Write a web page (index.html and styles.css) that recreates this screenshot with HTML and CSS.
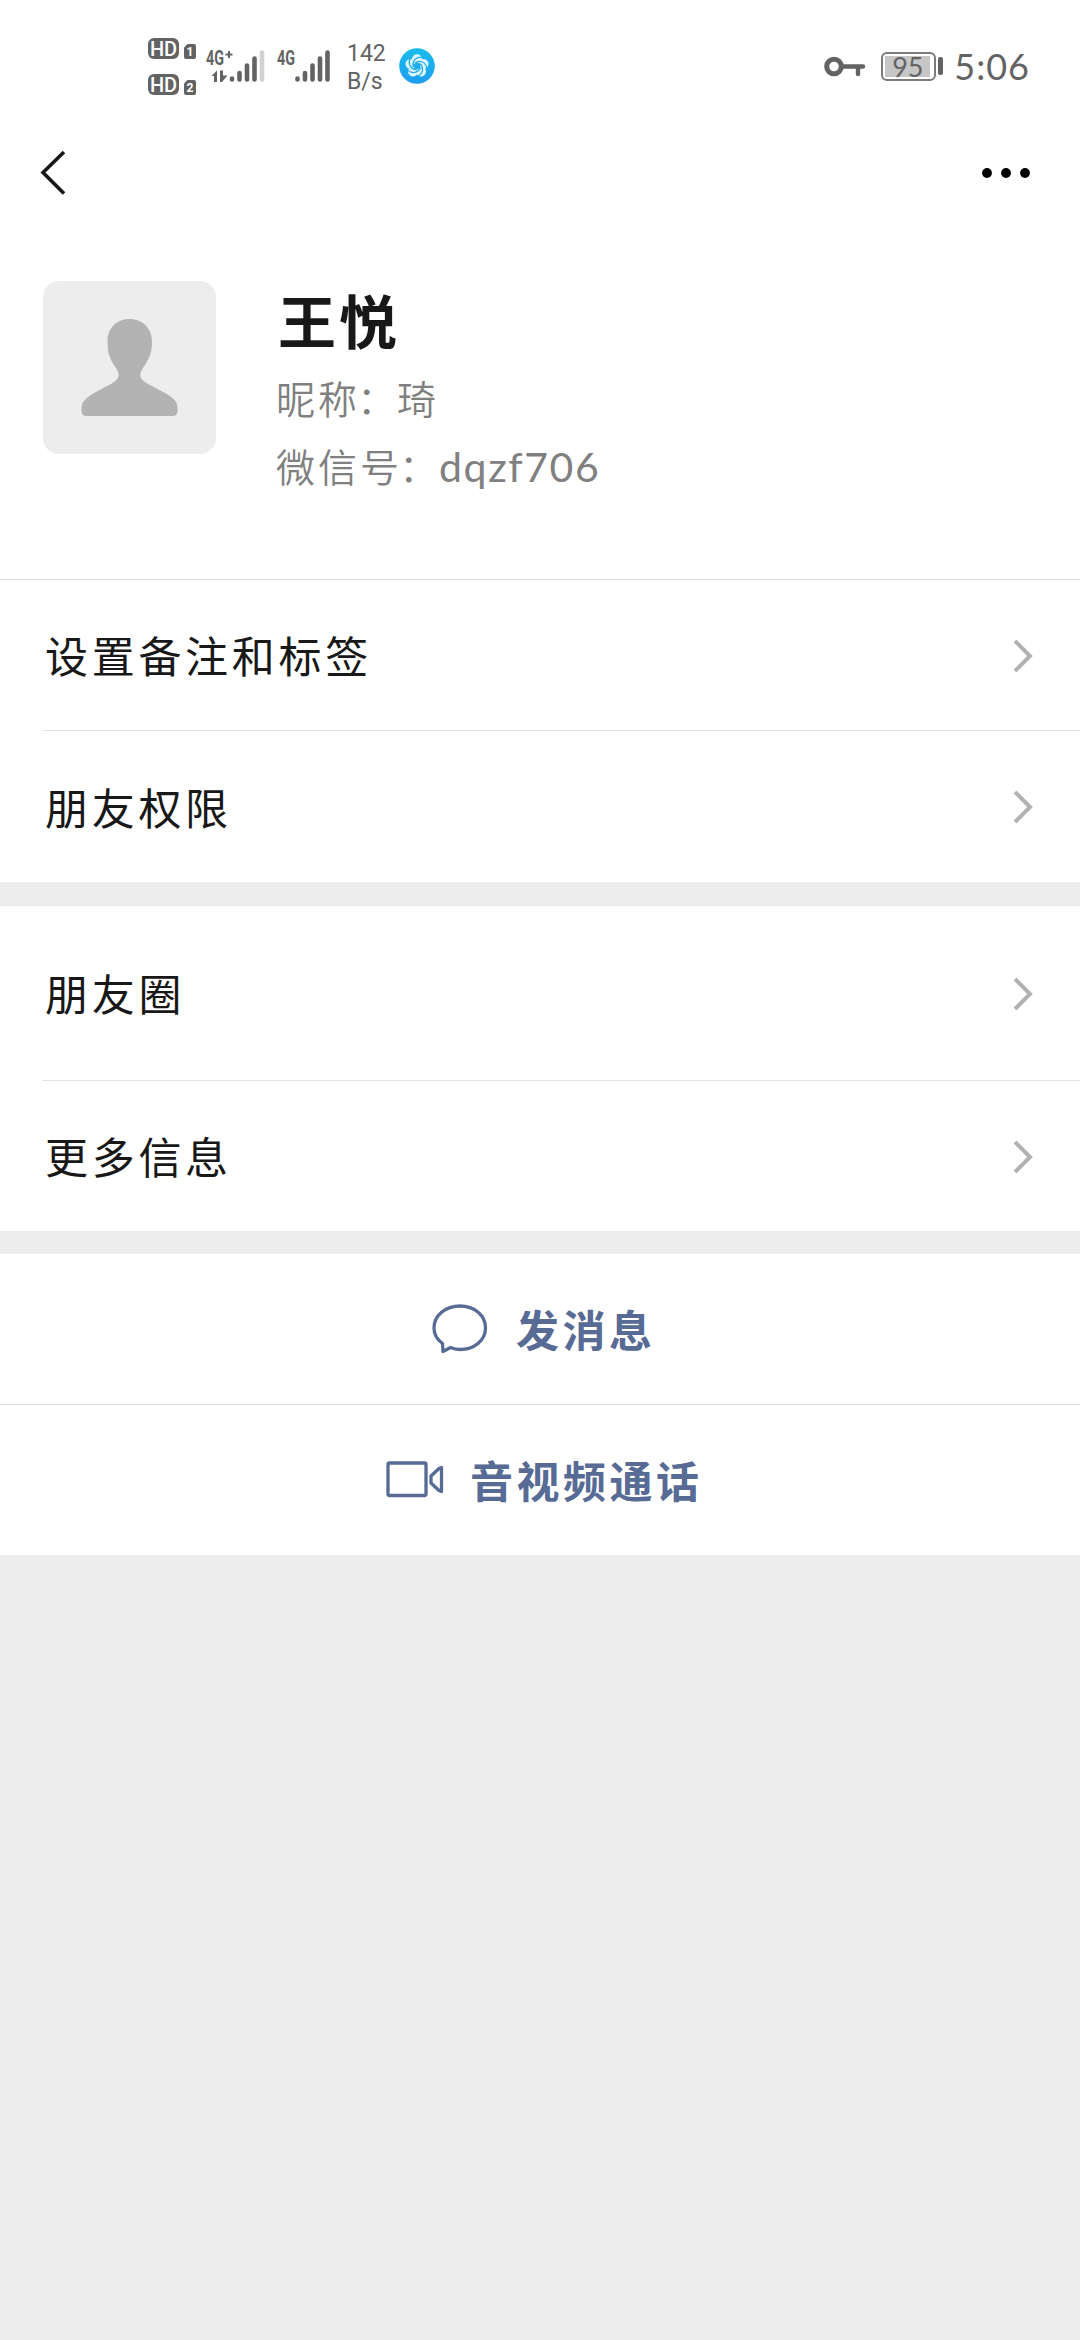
FILE: index.html
```html
<!DOCTYPE html>
<html lang="zh-CN">
<head>
<meta charset="utf-8">
<title>王悦</title>
<link rel="stylesheet" href="styles.css">
</head>
<body>
<header class="status">
  <div class="hd-group">
    <div class="hd-row"><span class="hd">HD</span><svg class="sim" viewBox="0 0 12 15"><path d="M3.5 0H10a2 2 0 0 1 2 2v11a2 2 0 0 1-2 2H2a2 2 0 0 1-2-2V3.5z" fill="#636363"/><text x="6" y="12" text-anchor="middle">1</text></svg></div>
    <div class="hd-row"><span class="hd">HD</span><svg class="sim" viewBox="0 0 12 15"><path d="M3.5 0H10a2 2 0 0 1 2 2v11a2 2 0 0 1-2 2H2a2 2 0 0 1-2-2V3.5z" fill="#636363"/><text x="6" y="12" text-anchor="middle">2</text></svg></div>
  </div>
  <svg class="signal-one" viewBox="0 0 62 40">
    <text class="net" x="1" y="21" textLength="18" lengthAdjust="spacingAndGlyphs">4G</text>
    <path d="M20.500 10.500h7M24 7v7" stroke="#636363" stroke-width="2"/>
    <g fill="#636363"><path d="M6.500 32L12 26.500V38H9V32Z"/><path d="M15 26.500H18V31.500H22.500L17 38H15Z"/></g>
    <g stroke="#636363" stroke-width="4.600" stroke-linecap="round"><path d="M27 34.500v1M34.500 29v6.500M42 21.500v14M49.500 14.500v21"/><path d="M57 8.500v27" stroke="#d2d2d2"/></g>
  </svg>
  <svg class="signal-two" viewBox="0 0 56 40">
    <text class="net" x="1" y="21" textLength="18" lengthAdjust="spacingAndGlyphs">4G</text>
    <g stroke="#636363" stroke-width="4.600" stroke-linecap="round"><path d="M21.500 34.500v1M29 29v6.500M36.500 21.500v14M44 14.500v21M51.500 8.500v27"/></g>
  </svg>
  <div class="speed"><span>142</span><span>B/s</span></div>
  <svg class="swirl" viewBox="-18 -18 36 36">
    <defs><linearGradient id="sky" x1="0" y1="0" x2="0" y2="1"><stop offset="0" stop-color="#19bde9"/><stop offset="1" stop-color="#1e9cf2"/></linearGradient>
    <path id="arm" d="M-2-3C2-6 8-5 10 2"/><circle id="lobe" cx="0" cy="-6.800" r="5"/></defs>
    <circle r="17.800" fill="url(#sky)"/>
    <g fill="#dff6ff"><use href="#lobe"/><use href="#lobe" transform="rotate(72)"/><use href="#lobe" transform="rotate(144)"/><use href="#lobe" transform="rotate(216)"/><use href="#lobe" transform="rotate(288)"/></g>
    <circle r="3.200" fill="#1eaeec"/>
    <g fill="none" stroke="#1eaeec" stroke-width="1.300"><use href="#arm"/><use href="#arm" transform="rotate(72)"/><use href="#arm" transform="rotate(144)"/><use href="#arm" transform="rotate(216)"/><use href="#arm" transform="rotate(288)"/></g>
  </svg>
  <svg class="key" viewBox="0 0 42 22"><circle cx="10" cy="10.500" r="7.300" fill="none" stroke="#636363" stroke-width="5"/><path d="M18 10.500H39M34 10.500V18" fill="none" stroke="#636363" stroke-width="4.400" stroke-linecap="round"/></svg>
  <div class="battery"><span class="charge">95</span></div><i class="battery-tip"></i>
  <time class="clock">5:06</time>
</header>

<nav class="nav">
  <svg class="back" viewBox="0 0 28 48"><path d="M24 3L3 23.500L24 44.500" fill="none" stroke="#181818" stroke-width="3.600"/></svg>
  <svg class="more" viewBox="0 0 50 12"><circle cx="6" cy="6" r="4.900"/><circle cx="25" cy="6" r="4.900"/><circle cx="44" cy="6" r="4.900"/></svg>
</nav>

<section class="profile">
  <svg class="avatar" viewBox="0 0 173 173"><rect width="173" height="173" rx="16" fill="#ededed"/><path d="M86.500 38C100 38 109 48 109 60C109 71 107 76 102 84C98 90 97 92 97.500 95C98 98 101 101 107 104L122 112C132 118 134.500 121 134.500 127V130Q134.500 135 129.500 135H43.500Q38.500 135 38.500 130V127C38.500 121 42 118 51 112L66 104C72 101 75 98 75.500 95C76 92 75 90 71 84C66 76 64.500 71 64.500 60C64.500 48 73 38 86.500 38Z" fill="#b3b3b3"/></svg>
  <div class="who">
    <h1 class="name">王悦</h1>
    <p class="detail"><span>昵称</span><span class="colon">：</span><span>琦</span></p>
    <p class="detail"><span>微信号</span><span class="colon">：</span><span class="wxid">dqzf706</span></p>
  </div>
</section>

<main>
  <section class="group">
    <a class="row first"><span>设置备注和标签</span><svg class="chevron" viewBox="0 0 20 34"><path d="M2 2L17 17L2 32"/></svg></a>
    <a class="row last"><span>朋友权限</span><svg class="chevron" viewBox="0 0 20 34"><path d="M2 2L17 17L2 32"/></svg></a>
  </section>
  <section class="group moments">
    <a class="row tall"><span>朋友圈</span><svg class="chevron" viewBox="0 0 20 34"><path d="M2 2L17 17L2 32"/></svg></a>
    <a class="row"><span>更多信息</span><svg class="chevron" viewBox="0 0 20 34"><path d="M2 2L17 17L2 32"/></svg></a>
  </section>
  <section class="group actions">
    <a class="action message"><svg class="bubble" viewBox="0 0 56 50"><path d="M10.500 39.500C5 35.500 2 30 2 24C2 11.500 13.500 2 28 2S53.500 11.500 53.500 24S42 45.500 28 45.500Q23 45.500 18.500 43.500L11 47.500Z"/></svg><span>发消息</span></a>
    <a class="action call"><svg class="camera" viewBox="0 0 58 38"><rect x="2" y="2" width="38" height="32.500" rx="1.500"/><path d="M55.500 6.500V30.500L53 29.500L45 22V15L53 7.500Z"/></svg><span>音视频通话</span></a>
  </section>
</main>
</body>
</html>
```

FILE: styles.css
```css
* { box-sizing: border-box; }
body {
  margin: 0;
  width: 1080px;
  min-height: 2340px;
  background: #ededed;
  color: #181818;
  font-family: "Noto Sans CJK SC", sans-serif;
}
svg { display: block; flex: none; }

.status {
  display: flex;
  align-items: flex-start;
  height: 132px;
  padding: 34px 50px 0 148px;
  background: #fff;
  color: #636363;
}
.hd-group { display: grid; gap: 14px; padding-top: 3px; width: 48px; }
.hd-row { display: flex; align-items: flex-end; justify-content: space-between; height: 22px; }
.hd {
  width: 31px; height: 21px;
  border-radius: 6px;
  background: #636363;
  color: #fff;
  font: 500 20px/22px Roboto, sans-serif;
  text-align: center;
}
.sim { width: 12px; height: 15px; }
.sim text { font: 700 12px Roboto, sans-serif; fill: #fff; }
.net { font: 700 20px Roboto, sans-serif; fill: #636363; }
.signal-one { width: 62px; height: 40px; margin: 10px 0 0 9px; }
.signal-two { width: 56px; height: 40px; margin: 10px 0 0 9px; }
.speed {
  display: grid;
  width: 40px;
  margin: 6px 0 0 15px;
  font: 400 23px/28px Roboto, sans-serif;
}
.swirl { width: 36px; height: 36px; margin: 14px 0 0 12px; }
.key { width: 42px; height: 22px; margin: 22px 0 0 auto; }
.battery {
  width: 55px; height: 29px;
  margin: 18px 0 0 15px;
  padding: 2px;
  border: 2px solid #7a7a7a;
  border-radius: 6px;
}
.charge {
  display: block;
  width: 45px; height: 21px;
  background: #c6c6c6;
  font: 400 27px/21px Lato, sans-serif;
  text-align: center;
}
.battery-tip { width: 5px; height: 18px; margin: 23px 0 0 2px; border-radius: 2px; background: #636363; }
.clock { margin: 9px 0 0 11px; font: 400 36px/46px Lato, sans-serif; letter-spacing: 1px; }

.nav {
  display: flex;
  justify-content: space-between;
  height: 129px;
  padding: 17px 49px 0 40px;
  background: #fff;
}
.back { width: 28px; height: 48px; }
.more { width: 50px; height: 12px; margin-top: 18px; }

.profile {
  display: flex;
  gap: 60px;
  height: 318px;
  padding: 20px 43px 0;
  background: #fff;
}
.avatar { width: 173px; height: 173px; }
.who { padding-top: 3px; }
.name { margin: 0 0 9px 2px; font-size: 58px; line-height: 70px; font-weight: 700; letter-spacing: 3px; }
.detail { display: flex; align-items: center; margin: 0; height: 68px; color: #808080; font-size: 39px; font-weight: 350; letter-spacing: 3px; }
.colon { width: 40px; margin-left: -3px; letter-spacing: 0; }
.wxid { padding-top: 2px; font-family: Lato, sans-serif; font-size: 41px; font-weight: 400; letter-spacing: 1.600px; }

.group { border-top: 1px solid #dedede; background: #fff; }
.group + .group { margin-top: 23px; border-top: 0; }
.group + .moments { margin-top: 24px; }
.row {
  display: flex;
  align-items: center;
  justify-content: space-between;
  height: 151px;
  margin-left: 43px;
  padding: 0 47px 2px 2px;
  font-size: 43px;
  font-weight: 400;
  letter-spacing: 3.700px;
}
.row + .row { border-top: 1px solid #e0e0e0; }
.first { height: 150px; }
.last { height: 152px; }
.tall { height: 174px; }
.chevron { width: 20px; height: 34px; margin-top: 3px; }
.chevron path { fill: none; stroke: #b2b2b2; stroke-width: 4; }

.action {
  display: flex;
  align-items: center;
  height: 150px;
  padding-bottom: 2px;
  color: #576b95;
  font-size: 43px;
  font-weight: 700;
  letter-spacing: 3.500px;
}
.action + .action { border-top: 1px solid #dedede; height: 151px; }
.action svg { fill: none; stroke: #576b95; stroke-width: 3.300; stroke-linejoin: round; }
.message { gap: 28px; padding-left: 432px; }
.call { gap: 26px; padding-left: 386px; }
.bubble { width: 56px; height: 50px; margin-top: 2px; }
.camera { width: 58px; height: 38px; margin-top: 2px; }
```
